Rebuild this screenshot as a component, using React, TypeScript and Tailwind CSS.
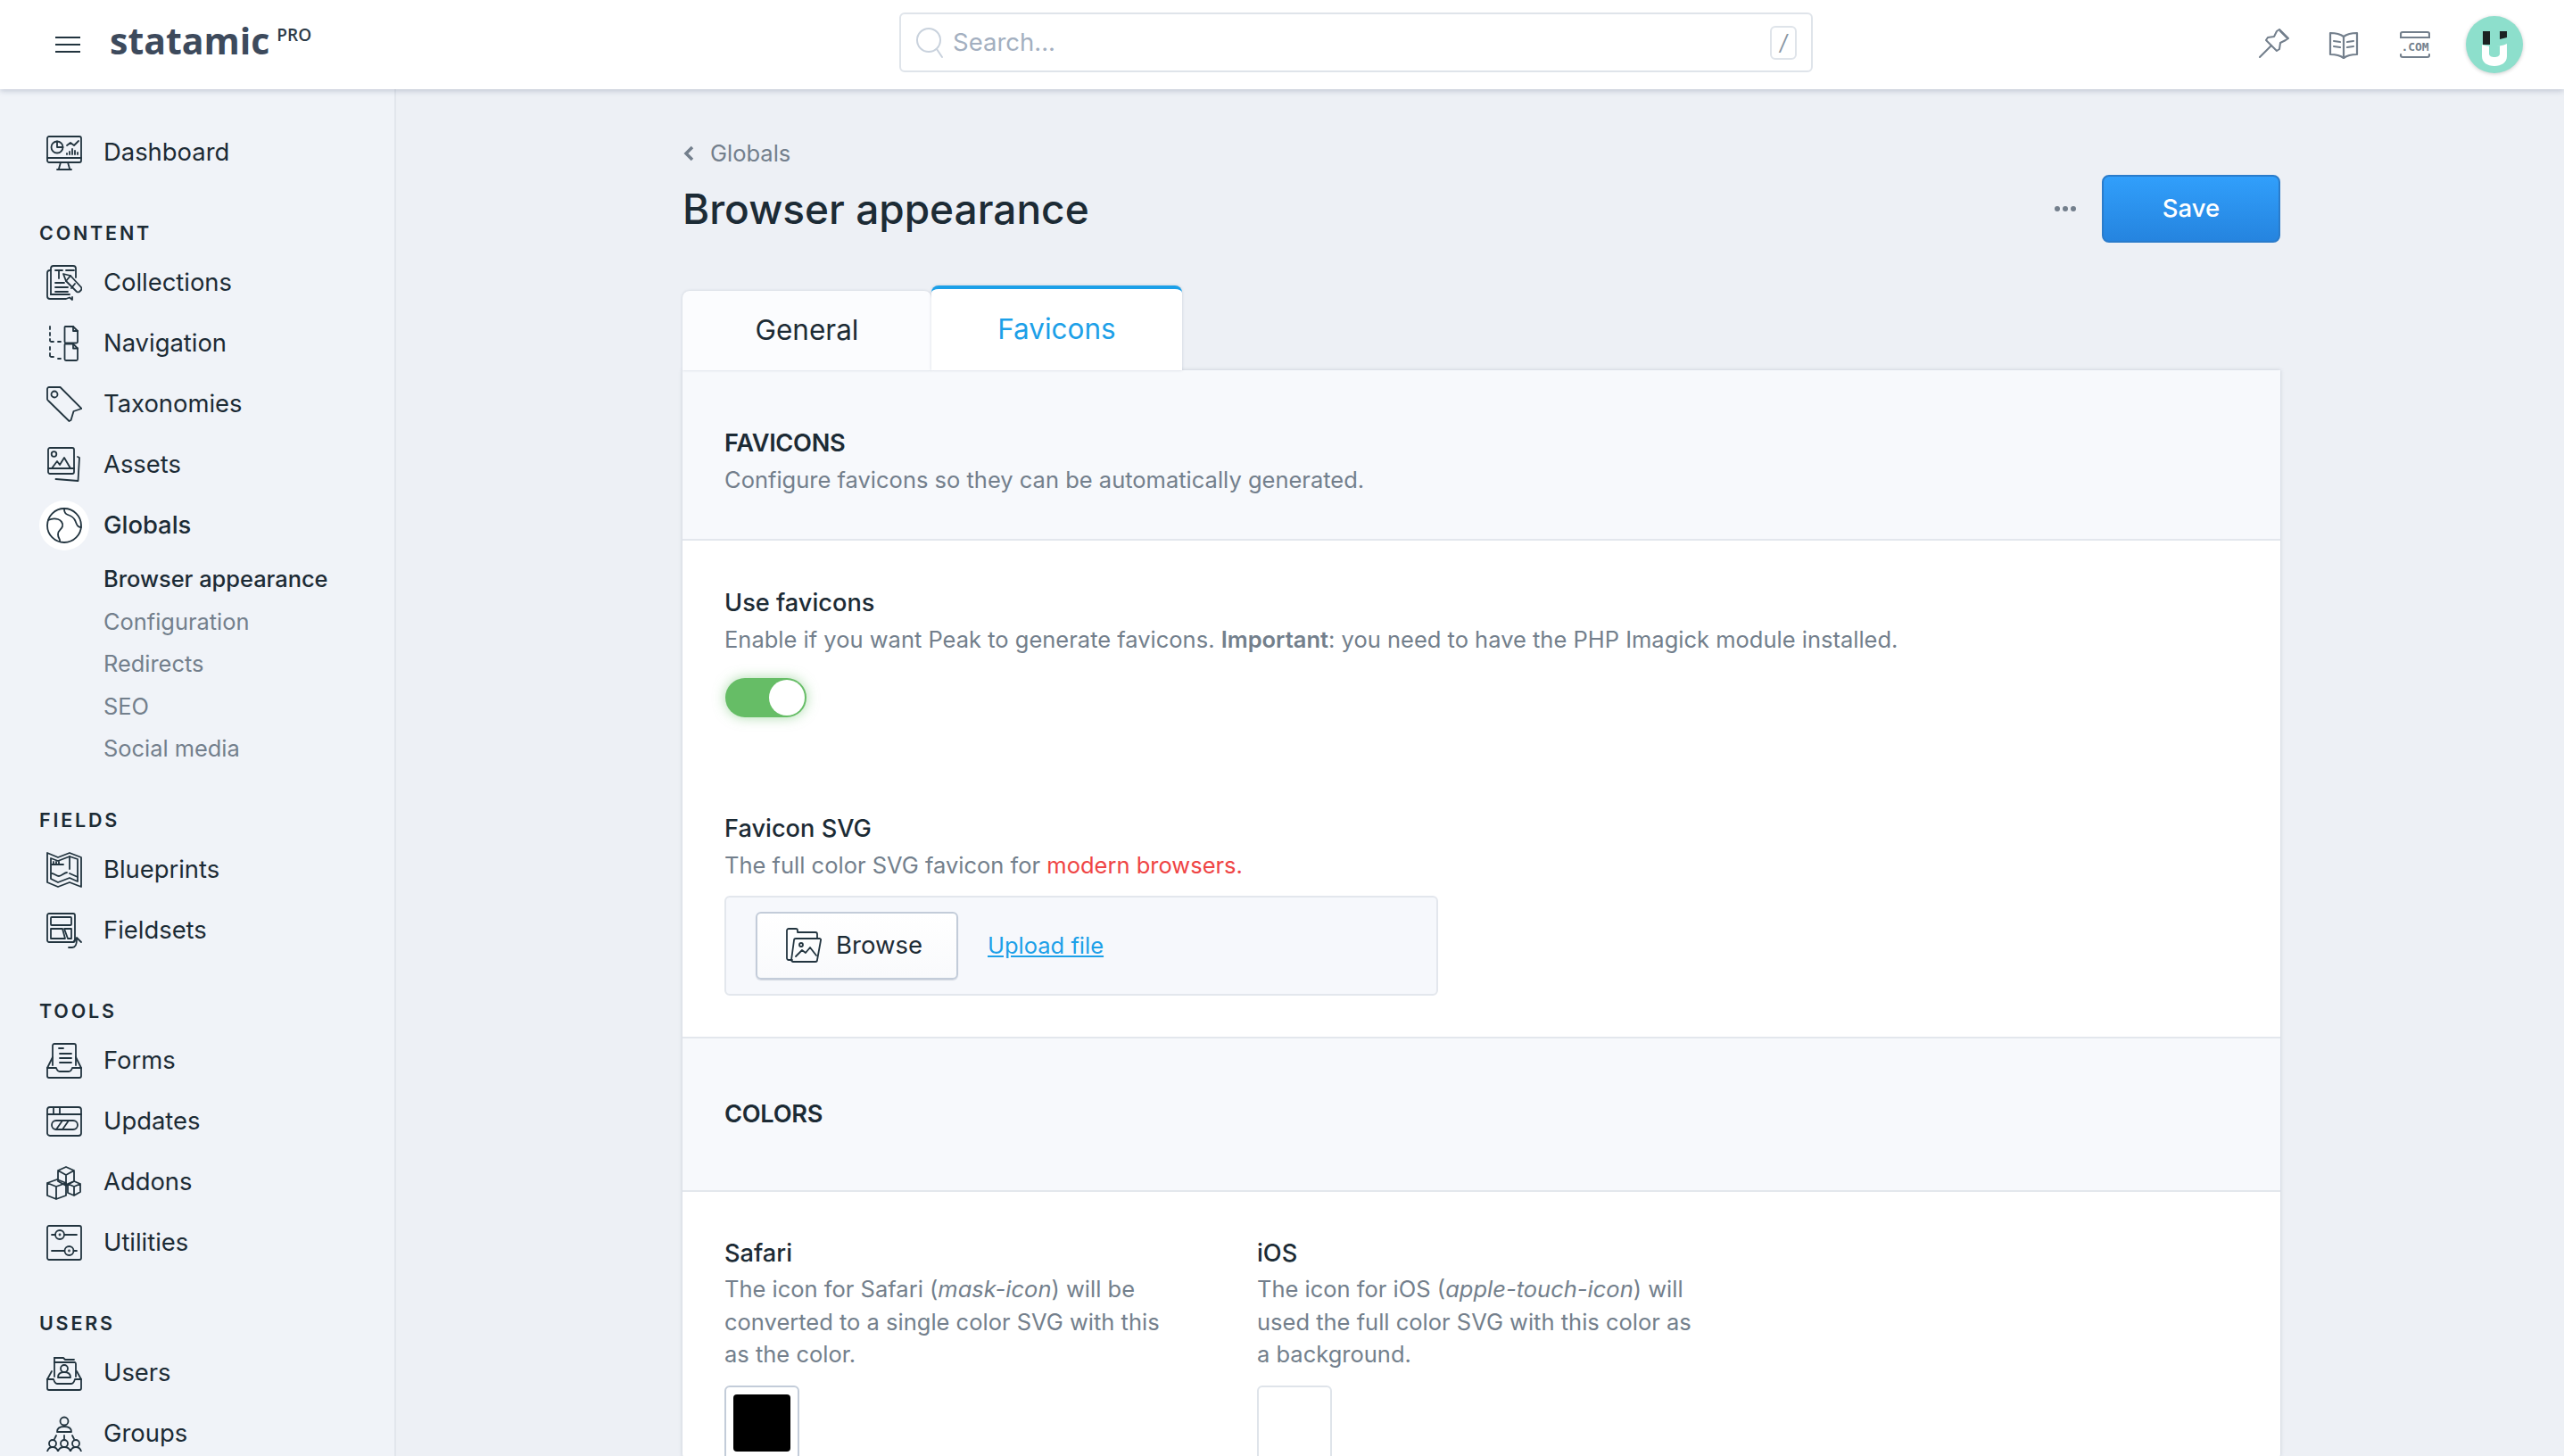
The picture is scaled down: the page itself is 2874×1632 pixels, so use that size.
import React from "react";

const Ico = ({ children, className = "w-[40px] h-[40px] text-[#22343f]", sw = 1.8 }: { children: React.ReactNode; className?: string; sw?: number }) => (
  <svg viewBox="0 0 40 40" fill="none" stroke="currentColor" strokeWidth={sw} strokeLinecap="round" strokeLinejoin="round" className={className}>
    {children}
  </svg>
);

const icons: Record<string, React.ReactNode> = {
  dashboard: (<>
    <rect x="1" y="2" width="38" height="29" rx="2" /><path d="M1 26h38M16 31l-2 7M24 31l2 7M12 39h16" />
    <circle cx="12" cy="14" r="6.5" /><path d="M12 7.5V14h6.5" /><path d="M23 12l4-3 4 3 5-5" /><path d="M26 22v-3M29 22v-6M32 22v-4M35 22v-2M23 22v-1" />
  </>),
  collections: (<>
    <path d="M5 6H4a3 3 0 0 0-3 3v26a3 3 0 0 0 3 3h18l4-1.500 3 2.500 0-3" /><path d="M5 33V4a3 3 0 0 1 3-3h22a3 3 0 0 1 3 3v10" /><path d="M5 33h21" />
    <path d="M10 6h8M14 6v9M22 6h9M10 20h10M10 25h14M10 30h14" />
    <path d="M19 10l8 2 12 13a3 3 0 0 1 0 3l-2 2a3 3 0 0 1-3 0L22 18z" /><path d="M27 12l-5 6" /><path d="M32 21l-4 5" />
  </>),
  navigation: (<>
    <path d="M4 1v3M4 8v3M4 15v2a2 2 0 0 0 2 1h2M13 18h3M4 24v3M4 31v3a2 2 0 0 0 2 1h2M13 37h3" />
    <path d="M21 1h9l5 5v12a1.5 1.5 0 0 1-1.500 1.500H22a1.500 1.500 0 0 1-1.500-1.500V2.500A1.500 1.500 0 0 1 21 1z" /><path d="M30 1v5h5" />
    <path d="M21 22h9l5 5v12a1.500 1.500 0 0 1-1.500 1.500H22a1.500 1.500 0 0 1-1.500-1.500V23.500A1.500 1.500 0 0 1 21 22z" transform="translate(0 -1.500)" /><path d="M30 20.500v5h5" />
  </>),
  taxonomies: (<>
    <path d="M1 3a2 2 0 0 1 2-2h12.500l24 24-9 3-3 10-2 1L2 16a2 2 0 0 1-1-1.500z" /><circle cx="9" cy="9" r="3.500" />
  </>),
  assets: (<>
    <rect x="2" y="1" width="29" height="29" rx="2" /><path d="M2 24h29" /><circle cx="8.500" cy="8" r="2.800" /><path d="M6 24l6-8 3 4 5-8 7 12" />
    <path d="M35 11l2 1-1.500 26-25-2" />
  </>),
  globals: (<>
    <circle cx="20" cy="20" r="19" /><path d="M2 14c4-2 8-2 11-1s6 4 5 8-5 4-5 9 3 5 2 8" /><path d="M20 2c0 3 1 5 4 6s6 2 8 6 2 8 7 8" />
  </>),
  blueprints: (<>
    <path d="M1 1l12 5 13-5 13 5v33l-13-5-13 5-12-5z" /><path d="M5 7l8 3 13-5 9 3v25l-9-4-13 5-8-4z" />
    <path d="M6 14h13M8 11v3M11 11v3M14 11v3M26 5v14M6 24c3 0 5 3 8 3s6-4 9-4M26 24l9 4" />
  </>),
  fieldsets: (<>
    <rect x="1" y="1" width="31" height="32" rx="2" /><rect x="5" y="5" width="23" height="9" rx="1" /><path d="M5 18h13l3 11H5z" /><path d="M20 18h8v11h-4z" />
    <path d="M25 39h4c4 0 5-3 5-9" /><path d="M30 33l4-5 5 5" />
  </>),
  forms: (<>
    <path d="M7 25V3a2 2 0 0 1 2-2h22a2 2 0 0 1 2 2v22" /><path d="M14 6h5M15 12h13M15 17h13M15 22h13" />
    <path d="M7 16l-6 12v9a2 2 0 0 0 2 2h34a2 2 0 0 0 2-2v-9l-6-12" /><path d="M1 28h10c1 3 2 4 4 4h10c2 0 3-1 4-4h10" />
  </>),
  updates: (<>
    <rect x="1" y="4" width="38" height="32" rx="3" /><path d="M1 12h38M8 4v8M15 4v8" /><rect x="6" y="19" width="29" height="10" rx="5" /><path d="M11 29l7-10M18 29l7-10" />
  </>),
  addons: (<>
    <path d="M13 7l9-4 9 4v12l-9 5-9-5zM13 7l9 5 9-5M22 12v12" /><path d="M1 21l11-4 10 4v14l-11 4-10-4zM1 21l10 4 11-4M11 25v14" />
    <path d="M24 22l7-3 7 3v9l-7 4-7-3zM24 22l7 3 7-3M31 25v10" />
  </>),
  utilities: (<>
    <rect x="1" y="1" width="38" height="38" rx="2" /><circle cx="15" cy="11" r="5" /><circle cx="25.500" cy="29" r="5" /><path d="M6 11h4M20 11h14M6 29h14M30.500 29h3.500" /><circle cx="15" cy="11" r=".5" /><circle cx="25.500" cy="29" r=".5" />
  </>),
  users: (<>
    <path d="M9 24V8h23a2 2 0 0 1 1 2v14" /><path d="M9 3h10l2 2h10" /><path d="M9 8V3" />
    <circle cx="20" cy="15" r="4" /><path d="M13 25c0-5 3-6 7-6s7 1 7 6z" />
    <path d="M6 18l-5 9v10a2 2 0 0 0 2 2h34a2 2 0 0 0 2-2V27l-5-9" /><path d="M1 27h7c1 3 2 5 4 5h16c2 0 3-2 4-5h7" />
  </>),
  groups: (<>
    <circle cx="20" cy="6" r="4.500" /><path d="M12 18c0-5 4-6 8-6s8 1 8 6z" /><path d="M20 22v4M11 22l-2 4M29 22l2 4" />
    <circle cx="7" cy="31" r="4" /><circle cx="20" cy="31" r="4" /><circle cx="33" cy="31" r="4" /><path d="M1 40c1-4 3-5 6-5s5 1 6 5c1-4 4-5 7-5s6 1 7 5c1-4 3-5 6-5s5 1 6 5" />
  </>),
};

const Row = ({ icon, label, active }: { icon: string; label: string; active?: boolean }) => (
  <div className="h-[68px] flex items-center relative">
    <div className={active ? "w-[56px] h-[56px] rounded-full bg-white flex items-center justify-center" : "w-[56px] h-[56px] flex items-center justify-center"}>
      <Ico>{icons[icon]}</Ico>
    </div>
    <span className={active ? "ml-[16px] text-[27.400px] font-medium text-[#1c2b35]" : "ml-[16px] text-[27.400px] text-[#1c2b35]"}>{label}</span>
  </div>
);

const Label = ({ children }: { children: React.ReactNode }) => (
  <div className="mt-[40px] mb-[6px] h-[32px] leading-[32px] text-[21.500px] font-semibold tracking-[2.800px] text-[#1c2b35]">{children}</div>
);

const Sub = ({ children, on }: { children: React.ReactNode; on?: boolean }) => (
  <div className={on ? "h-[47.600px] leading-[47.600px] pl-[72px] text-[25.400px] font-medium text-[#1c2b35]" : "h-[47.600px] leading-[47.600px] pl-[72px] text-[25.400px] text-[#737f8c]"}>{children}</div>
);

const Sidebar = () => (
  <aside className="w-[444px] shrink-0 border-r-2 border-[#e2e6ec] pl-[44px] pt-[37px] bg-[#f0f3f8]">
    <Row icon="dashboard" label="Dashboard" />
    <Label>CONTENT</Label>
    <Row icon="collections" label="Collections" />
    <Row icon="navigation" label="Navigation" />
    <Row icon="taxonomies" label="Taxonomies" />
    <Row icon="assets" label="Assets" />
    <Row icon="globals" label="Globals" active />
    <div className="mt-[2px]">
      <Sub on>Browser appearance</Sub>
      <Sub>Configuration</Sub>
      <Sub>Redirects</Sub>
      <Sub>SEO</Sub>
      <Sub>Social media</Sub>
    </div>
    <Label>FIELDS</Label>
    <Row icon="blueprints" label="Blueprints" />
    <Row icon="fieldsets" label="Fieldsets" />
    <Label>TOOLS</Label>
    <Row icon="forms" label="Forms" />
    <Row icon="updates" label="Updates" />
    <Row icon="addons" label="Addons" />
    <Row icon="utilities" label="Utilities" />
    <Label>USERS</Label>
    <Row icon="users" label="Users" />
    <Row icon="groups" label="Groups" />
  </aside>
);

const Header = () => (
  <header className="h-[100px] bg-white shadow-[0_2px_6px_rgba(80,95,125,0.28)] relative z-10 flex items-center shrink-0">
    <svg viewBox="0 0 28 20" className="ml-[62px] w-[28px] h-[20px] text-[#22343f]" fill="none" stroke="currentColor" strokeWidth="2"><path d="M0 2h28M0 10h28M0 18h28" /></svg>
    <div className="ml-[33px] flex items-start self-start pt-[15px]">
      <span className="text-[41px] leading-[60px] font-bold text-[#3d4a5c] [font-family:'Open_Sans',sans-serif]">statamic</span>
      <span className="ml-[8px] mt-[12px] text-[19px] leading-[24px] font-semibold text-[#2c3a47] [font-family:'Open_Sans',sans-serif]">PRO</span>
    </div>
    <div className="absolute left-[1008px] top-[14px] w-[1024px] h-[67px] border-2 border-[#dfe4ea] rounded-[6px] flex items-center pl-[16px] pr-[16px]">
      <svg viewBox="0 0 32 36" className="w-[32px] h-[36px] text-[#c9d2dd]" fill="none" stroke="currentColor" strokeWidth="2" strokeLinecap="round"><circle cx="15" cy="15" r="13" /><path d="M24 25l6 9" /></svg>
      <span className="ml-[10px] text-[27.500px] text-[#a3afc0]">Search...</span>
      <span className="ml-auto w-[30px] h-[38px] border-2 border-[#dfe4ea] rounded-[6px] flex items-center justify-center text-[24px] text-[#8a96a3] italic">/</span>
    </div>
    <div className="ml-auto flex items-center mr-[46px] text-[#737f8c]">
      <svg viewBox="0 0 34 34" className="w-[34px] h-[34px] mt-[-2px]" fill="none" stroke="currentColor" strokeWidth="2" strokeLinecap="round" strokeLinejoin="round">
        <path d="M1 32l13-13" /><path d="M23 1l10 10-3 2-6 3-1 7-3 2-12-12 2-3 7-1 3-6z" /><path d="M24 3l7 7" />
      </svg>
      <svg viewBox="0 0 34 32" className="ml-[44px] w-[34px] h-[32px]" fill="none" stroke="currentColor" strokeWidth="2.200" strokeLinejoin="round" strokeLinecap="round">
        <path d="M17 7c-4-3-9-4-15-4v24c6 0 11 1 15 4 4-3 9-4 15-4V3c-6 0-11 1-15 4zM17 7v24" /><path d="M6 12l7 1M6 18l7 1M28 12l-7 1M28 18l-7 1" />
      </svg>
      <svg viewBox="0 0 34 32" className="ml-[46px] w-[34px] h-[32px]" fill="none" stroke="currentColor" strokeWidth="2.200" strokeLinecap="round">
        <path d="M1 8V4a2 2 0 0 1 2-2h28a2 2 0 0 1 2 2v4zM1 27v1a2 2 0 0 0 2 2h28a2 2 0 0 0 2-2v-1" />
        <text x="17" y="23" textAnchor="middle" fontSize="13" fontWeight="700" fill="currentColor" stroke="none" fontFamily="'DejaVu Sans Mono', monospace" textLength="31">.COM</text>
      </svg>
      <div className="ml-[40px] w-[64px] h-[64px] rounded-full bg-[#8ddfcc] shadow-[0_1px_4px_rgba(0,0,0,0.2)] flex items-center justify-center">
        <svg viewBox="0 0 64 64" className="w-[64px] h-[64px]">
          <path d="M19 17h8v15h-8zM38 17h8v7l-8 2z" fill="#1b2222" />
          <path d="M18 32c8 3 20 3 28-1v14c0 7-6 11-14 11s-14-4-14-11z" fill="#fff" />
          <path d="M26 33c3 1 9 1 12 0v9c0 3-3 4-6 4s-6-1-6-4z" fill="#8ddfcc" />
        </svg>
      </div>
    </div>
  </header>
);

const Title = ({ children }: { children: React.ReactNode }) => (
  <div className="h-[36px] leading-[36px] text-[27.200px] font-medium text-[#1c2b35]">{children}</div>
);
const Desc = ({ children }: { children: React.ReactNode }) => (
  <div className="mt-[5px] h-[36px] leading-[36px] text-[25.500px] text-[#737f8c]">{children}</div>
);
const Section = ({ children }: { children: React.ReactNode }) => (
  <div className="h-[36px] leading-[36px] text-[27.200px] font-semibold text-[#1c2b35] tracking-[-0.300px]">{children}</div>
);

const Main = () => (
  <main className="flex-1 pl-[321px] pt-[54px] min-w-0">
    <div className="w-[1791px]">
      <div className="h-[36px] flex items-center text-[25.500px] text-[#737f8c]">
        <svg viewBox="0 0 13 18" className="w-[13px] h-[18px] text-[#737f8c]" fill="none" stroke="currentColor" strokeWidth="3.500"><path d="M11 2L4 9l7 7" /></svg>
        <span className="ml-[18px]">Globals</span>
      </div>
      <div className="mt-[6px] h-[76px] flex items-center">
        <h1 className="text-[46px] font-medium text-[#1c2b35] leading-[76px]">Browser appearance</h1>
        <div className="ml-auto flex gap-[3px]">
          <span className="w-[6px] h-[6px] rounded-full bg-[#737f8c]" /><span className="w-[6px] h-[6px] rounded-full bg-[#737f8c]" /><span className="w-[6px] h-[6px] rounded-full bg-[#737f8c]" />
        </div>
        <button className="ml-[29px] w-[200px] h-[76px] rounded-[8px] border-2 border-[#2a7ccb] bg-gradient-to-b from-[#319ffb] to-[#2584df] text-white text-[27.500px] font-medium">Save</button>
      </div>
      <div className="mt-[48px] h-[95px] flex items-end">
        <div className="w-[279px] h-[89px] pb-[2px] bg-[#fbfcfe] rounded-t-[8px] shadow-[0_0_3px_rgba(80,95,125,0.25)] flex items-center justify-center text-[31.500px] text-[#1c2b35]">General</div>
        <div className="w-[281px] h-[95px] pb-[2px] bg-white rounded-t-[8px] border-t-4 border-[#1ca0e8] shadow-[0_0_3px_rgba(80,95,125,0.25)] flex items-center justify-center text-[31.500px] text-[#1ca0e8] relative z-[1]">Favicons</div>
      </div>
      <div className="bg-white shadow-[0_0_4px_rgba(80,95,125,0.25)] rounded-b-[8px]">
        <div className="bg-[#f7f9fc] pt-[64px] pb-[48px] px-[47px] border-b-2 border-[#e3e7ed]">
          <Section>FAVICONS</Section>
          <Desc>Configure favicons so they can be automatically generated.</Desc>
        </div>
        <div className="pt-[52px] pb-[46px] px-[47px] border-b-2 border-[#e3e7ed]">
          <Title>Use favicons</Title>
          <Desc>Enable if you want Peak to generate favicons. <b className="font-semibold">Important</b>: you need to have the PHP Imagick module installed.</Desc>
          <div className="mt-[25px] ml-[1px] w-[91px] h-[44px] rounded-full bg-[#66bd66] shadow-[0_0_14px_rgba(102,189,102,0.55)] flex items-center justify-end pr-[2px]">
            <span className="w-[40px] h-[40px] rounded-full bg-white" />
          </div>
          <div className="mt-[107px]"><Title>Favicon SVG</Title></div>
          <Desc>The full color SVG favicon for <span className="text-[#ef4444]">modern browsers.</span></Desc>
          <div className="mt-[16px] w-[800px] h-[112px] border-2 border-[#e3e7ed] rounded-[6px] bg-[#f6f8fc] flex items-center pl-[33px]">
            <div className="w-[227px] h-[76px] border-2 border-[#c3ccd9] rounded-[6px] bg-gradient-to-b from-white to-[#f9fafc] shadow-[0_1px_1px_rgba(80,95,125,0.2)] flex items-center pl-[32px]">
              <Ico className="w-[40px] h-[40px] text-[#22343f]">
                <path d="M7 36H3a2 2 0 0 1-2-2V3a2 2 0 0 1 2-2h8a2 2 0 0 1 2 2v2h20a2 2 0 0 1 2 2v5" /><path d="M11 12h27a1.500 1.500 0 0 1 1 2l-4 22a2 2 0 0 1-2 2H8a2 2 0 0 1-2-2l3-22a2 2 0 0 1 2-2z" />
                <circle cx="17" cy="19" r="2" /><path d="M11 32l7-7 4 3 5-6 7 9" />
              </Ico>
              <span className="ml-[16px] text-[27.500px] text-[#1c2b35]">Browse</span>
            </div>
            <span className="ml-[33px] text-[25.500px] text-[#1ca0e8] underline">Upload file</span>
          </div>
        </div>
        <div className="bg-[#f7f9fc] h-[172px] px-[47px] border-b-2 border-[#e3e7ed] flex items-center">
          <Section>COLORS</Section>
        </div>
        <div className="pt-[51px] px-[47px] flex">
          <div className="w-[597px] pr-[100px]">
            <Title>Safari</Title>
            <p className="mt-[4px] leading-[36.500px] text-[25.500px] text-[#737f8c]">The icon for Safari (<i>mask-icon</i>) will be converted to a single color SVG with this as the color.</p>
            <div className="mt-[16px] w-[84px] h-[84px] border-2 border-[#c3ccd9] rounded-[6px] p-[8px]"><div className="w-full h-full bg-black rounded-[4px]" /></div>
          </div>
          <div className="w-[597px] pr-[100px]">
            <Title>iOS</Title>
            <p className="mt-[4px] leading-[36.500px] text-[25.500px] text-[#737f8c]">The icon for iOS (<i>apple-touch-icon</i>) will used the full color SVG with this color as a background.</p>
            <div className="mt-[16px] w-[84px] h-[84px] border-2 border-[#dfe4ea] rounded-[6px] p-[8px]"><div className="w-full h-full bg-white rounded-[4px]" /></div>
          </div>
        </div>
      </div>
    </div>
  </main>
);

export default function App() {
  return (
    <div className="w-[2874px] h-[1632px] overflow-hidden flex flex-col bg-[#edf0f5] font-['Inter',sans-serif]">
      <Header />
      <div className="flex flex-1 min-h-0">
        <Sidebar />
        <Main />
      </div>
    </div>
  );
}
